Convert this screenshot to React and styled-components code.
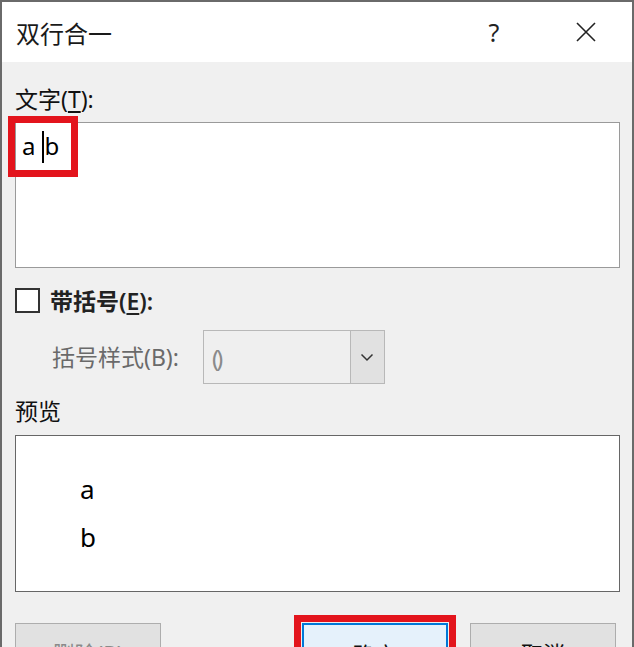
import React from 'react';
import styled, { createGlobalStyle } from 'styled-components';

const GlobalStyle = createGlobalStyle`
    html, body { margin:0; padding:0; background:#f0f0f0; }
    body { font-family:"Noto Sans", "Noto Sans CJK SC", sans-serif; color:#000; }
    * { box-sizing:border-box; }
`;

const Window = styled.div`
    width:634px;
    height:647px;
    overflow:hidden;
    border-top:2px solid #6a6a6a;
    border-left:2px solid #6a6a6a;
    border-right:2px solid #6a6a6a;
    background:#f0f0f0;
    display:flex;
    flex-direction:column;
`;

const TitleBar = styled.div`
    height:60px;
    flex-shrink:0;
    background:#fff;
    display:flex;
    align-items:center;
    padding-left:14px;
    font-family:"Noto Sans CJK SC", sans-serif;
`;

const Title = styled.div`
    font-size:24px;
    color:#1a1a1a;
    flex:1;
`;

const TitleButton = styled.div`
    width:92px;
    height:60px;
    display:flex;
    align-items:center;
    justify-content:center;
    font-family:"Noto Sans", sans-serif;
    font-size:25px;
    color:#222;
`;

const Body = styled.div`
    flex:1;
    display:flex;
    flex-direction:column;
    padding:0 13px;
`;

const Label = styled.div`
    height:30px;
    line-height:30px;
    font-size:23px;
    margin-top:${p => p.$top || 0}px;
    color:${p => p.$muted ? '#6a6a6a' : '#111'};
    u { text-underline-offset:3px; }
`;

const TextBox = styled.div`
    position:relative;
    margin-top:8px;
    width:605px;
    height:146px;
    background:#fff;
    border:1px solid #9a9a9a;
    font-size:24px;
    padding:6px 0 0 6px;
    line-height:34px;
`;

const Caret = styled.span`
    display:inline-block;
    width:2px;
    height:32px;
    background:#000;
    vertical-align:middle;
    margin:0 0 0 7px;
    position:relative;
    top:-2px;
`;

const Highlight = styled.div`
    position:absolute;
    left:-8px;
    top:-7px;
    width:70px;
    height:61px;
    border:7px solid #e3141c;
    pointer-events:none;
`;

const CheckRow = styled.div`
    display:flex;
    align-items:center;
    margin-top:19px;
    height:26px;
    gap:10px;
`;

const CheckBox = styled.div`
    width:25px;
    height:25px;
    border:2px solid #333;
    background:#fff;
`;

const CheckLabel = styled.div`
    font-size:23px;
    font-weight:600;
    color:#222;
    u { text-underline-offset:3px; }
`;

const StyleRow = styled.div`
    display:flex;
    align-items:center;
    margin-top:17px;
    padding-left:37px;
    gap:24px;
`;

const Combo = styled.div`
    width:182px;
    height:54px;
    border:1px solid #b8b8b8;
    background:#efefef;
    display:flex;
`;

const ComboValue = styled.div`
    flex:1;
    display:flex;
    align-items:center;
    padding-left:8px;
    font-size:24px;
    color:#8a8a8a;
    letter-spacing:-3px;
`;

const ComboArrow = styled.div`
    width:34px;
    background:#e1e1e1;
    border-left:1px solid #b8b8b8;
    display:flex;
    align-items:center;
    justify-content:center;
`;

const Preview = styled.div`
    margin-top:9px;
    width:605px;
    height:157px;
    background:#fff;
    border:1px solid #666;
    padding:29px 0 0 64px;
    font-size:26px;
    line-height:48px;
`;

const ButtonRow = styled.div`
    display:flex;
    margin-top:31px;
`;

const Button = styled.div`
    width:146px;
    height:52px;
    flex-shrink:0;
    background:${p => p.$primary ? '#e5f1fb' : '#e1e1e1'};
    border:${p => p.$primary ? '2px solid #0078d7' : '1px solid #adadad'};
    box-shadow:${p => p.$marked ? '0 0 0 1px #f0f0f0, 0 0 0 8px #e3141c' : 'none'};
    display:flex;
    justify-content:center;
    padding-top:12px;
    font-size:22px;
    color:${p => p.$disabled ? '#8a8a8a' : '#111'};
    margin-left:${p => p.$gap || 0}px;
`;

function CloseIcon() {
    return (
        <svg width="22" height="22" viewBox="0 0 22 22">
            <path d="M2 2 L20 20 M20 2 L2 20" stroke="#222" strokeWidth="1.6" fill="none" />
        </svg>
    );
}

function ChevronIcon() {
    return (
        <svg width="14" height="9" viewBox="0 0 14 9">
            <path d="M1.5 1.5 L7 7 L12.5 1.5" stroke="#333" strokeWidth="1.5" fill="none" />
        </svg>
    );
}

export default function App() {
    return (
        <>
            <GlobalStyle />
            <Window>
                <TitleBar>
                    <Title>双行合一</Title>
                    <TitleButton>?</TitleButton>
                    <TitleButton><CloseIcon /></TitleButton>
                </TitleBar>
                <Body>
                    <Label $top={22}>文字(<u>T</u>):</Label>
                    <TextBox>
                        a<Caret />b
                        <Highlight />
                    </TextBox>
                    <CheckRow>
                        <CheckBox />
                        <CheckLabel>带括号(<u>E</u>):</CheckLabel>
                    </CheckRow>
                    <StyleRow>
                        <Label $muted>括号样式(B):</Label>
                        <Combo>
                            <ComboValue>()</ComboValue>
                            <ComboArrow><ChevronIcon /></ComboArrow>
                        </Combo>
                    </StyleRow>
                    <Label $top={12}>预览</Label>
                    <Preview>
                        <div>a</div>
                        <div>b</div>
                    </Preview>
                    <ButtonRow>
                        <Button $disabled>删除(R)</Button>
                        <Button $primary $marked $gap={141}>确定</Button>
                        <Button $gap={22}>取消</Button>
                    </ButtonRow>
                </Body>
            </Window>
        </>
    );
}
